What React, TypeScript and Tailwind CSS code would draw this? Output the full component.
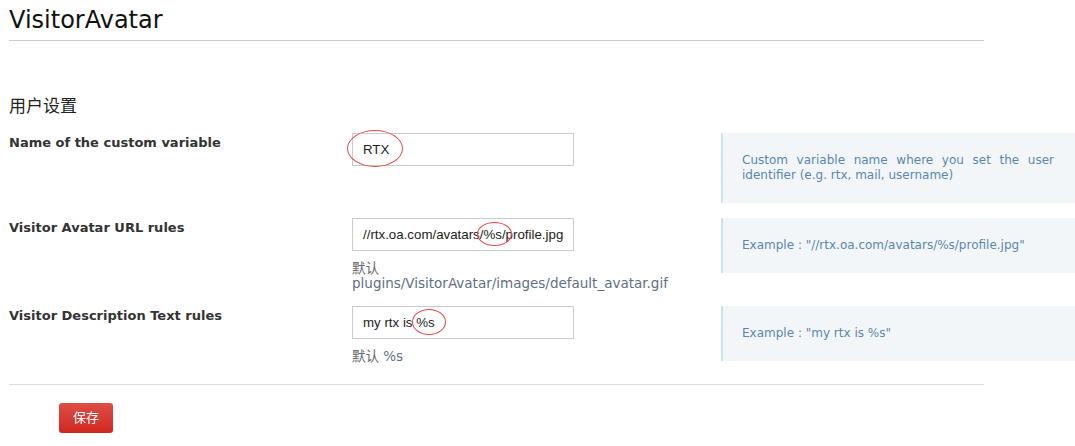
import React from 'react';

const ui = { fontFamily: '"DejaVu Sans", "Noto Sans CJK SC", sans-serif' };
const field = { fontFamily: '"Liberation Sans", Arial, "Noto Sans CJK SC", sans-serif' };

interface RowProps {
  label: string;
  value: string;
  hint?: string;
  help: string;
  mark: string; // annotation ellipse classes
}

const SettingRow: React.FC<RowProps> = ({ label, value, hint, help, mark }) => (
  <div className="flex items-start">
    <div className="w-[343px] shrink-0 text-[13px] leading-[18px] font-bold text-[#333] pt-[1px]">{label}</div>
    <div className="w-[369px] shrink-0">
      <div className="relative w-[222px]">
        <div
          className="h-[33px] border border-[#cccccc] px-[10px] flex items-center text-[13.3px] text-[#222]"
          style={field}
        >
          {value}
        </div>
        {/* 红圈标注 */}
        <div className={`absolute border border-[#e8474a] rounded-[50%] ${mark}`} />
      </div>
      {hint && (
        <div className="w-[330px] mt-[10px] text-[13.5px] leading-[15px] text-[#666]">
          默认 <span className="text-[#5f6f82]">{hint}</span>
        </div>
      )}
    </div>
    <div className="w-[354px] shrink-0 bg-[#f3f6f9] border-l-2 border-[#c9e5ef] pl-[19px] pr-[21px] py-5 text-[12px] leading-[15px] text-[#5a87b0] text-justify">
      {help}
    </div>
  </div>
);

export default function App() {
  return (
    <div className="w-[1075px] h-[446px] overflow-hidden bg-white px-[9px]" style={ui}>
      <div className="w-[975px]">
        <h1 className="text-[24px] leading-[29px] pt-[6px] pb-[5px] text-[#111] border-b border-[#cccccc]">
          VisitorAvatar
        </h1>

        <h2 className="mt-[55px] text-[17px] leading-[20px] text-[#222]">用户设置</h2>

        <div className="mt-[17px] flex flex-col gap-[15px]">
          <SettingRow
            label="Name of the custom variable"
            value="RTX"
            help="Custom variable name where you set the user identifier (e.g. rtx, mail, username)"
            mark="-left-[5px] -top-[3px] w-[56px] h-[37px]"
          />
          <SettingRow
            label="Visitor Avatar URL rules"
            value="//rtx.oa.com/avatars/%s/profile.jpg"
            hint="plugins/VisitorAvatar/images/default_avatar.gif"
            help={'Example : "//rtx.oa.com/avatars/%s/profile.jpg"'}
            mark="left-[125px] top-[4px] w-[35px] h-[24px]"
          />
          <SettingRow
            label="Visitor Description Text rules"
            value="my rtx is %s"
            hint="%s"
            help={'Example : "my rtx is %s"'}
            mark="left-[60px] top-[3px] w-[34px] h-[26px]"
          />
        </div>

        <div className="mt-[20px] border-t border-[#dddddd] pt-[18px] pl-[50px]">
          <button
            type="button"
            className="w-[54px] h-[30px] rounded-[3px] bg-gradient-to-b from-[#dd4d46] to-[#cf261e] text-white text-[13px]"
          >
            保存
          </button>
        </div>
      </div>
    </div>
  );
}
